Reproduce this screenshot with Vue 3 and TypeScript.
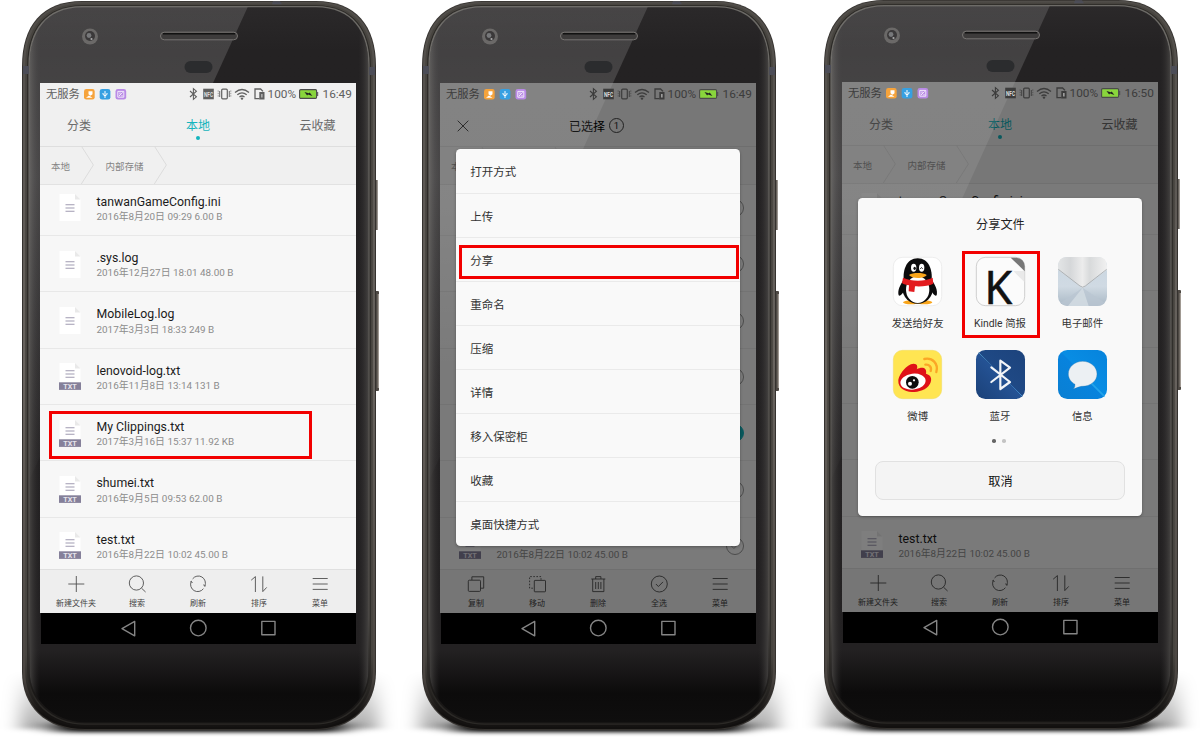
<script setup lang="ts">
interface FileRow { name: string; meta: string; txt: boolean; marked?: boolean; picked?: boolean }
interface Tool { icon: string; label: string }
interface Phone { mode: 'list' | 'menu' | 'share'; time: string; tools: Tool[] }

const files: FileRow[] = [
  { name: 'tanwanGameConfig.ini', meta: '2016年8月20日 09:29 6.00 B', txt: false },
  { name: '.sys.log', meta: '2016年12月27日 18:01 48.00 B', txt: false },
  { name: 'MobileLog.log', meta: '2017年3月3日 18:33 249 B', txt: false },
  { name: 'lenovoid-log.txt', meta: '2016年11月8日 13:14 131 B', txt: true },
  { name: 'My Clippings.txt', meta: '2017年3月16日 15:37 11.92 KB', txt: true, marked: true, picked: true },
  { name: 'shumei.txt', meta: '2016年9月5日 09:53 62.00 B', txt: true },
  { name: 'test.txt', meta: '2016年8月22日 10:02 45.00 B', txt: true },
]

const browseTools: Tool[] = [
  { icon: 'plus', label: '新建文件夹' },
  { icon: 'search', label: '搜索' },
  { icon: 'refresh', label: '刷新' },
  { icon: 'sort', label: '排序' },
  { icon: 'menu', label: '菜单' },
]
const selectTools: Tool[] = [
  { icon: 'copy', label: '复制' },
  { icon: 'move', label: '移动' },
  { icon: 'trash', label: '删除' },
  { icon: 'all', label: '全选' },
  { icon: 'menu', label: '菜单' },
]

const phones: Phone[] = [
  { mode: 'list', time: '16:49', tools: browseTools },
  { mode: 'menu', time: '16:49', tools: selectTools },
  { mode: 'share', time: '16:50', tools: browseTools },
]

const actions = ['打开方式', '上传', '分享', '重命名', '压缩', '详情', '移入保密柜', '收藏', '桌面快捷方式']

const targets = [
  { icon: 'qq', label: '发送给好友' },
  { icon: 'kindle', label: 'Kindle 简报' },
  { icon: 'mail', label: '电子邮件' },
  { icon: 'weibo', label: '微博' },
  { icon: 'bluetooth', label: '蓝牙' },
  { icon: 'message', label: '信息' },
]

const toolIcons: Record<string, string> = {
  plus: '<path d="M12.3 4v16M4.3 12h16"/>',
  search: '<circle cx="11.4" cy="11" r="7.1"/><path d="M16.5 16.2 20.6 20"/>',
  refresh: '<path d="M6.6 6.9A7.1 7.1 0 0 1 18.8 14M17.4 16.7A7.1 7.1 0 0 1 5.2 9.6"/><path d="M4.4 9.8 5.3 9.2 6.4 11M19.6 13.8 18.7 14.4 17.6 12.6"/>',
  sort: '<path d="M4.2 8.2 8.4 4.6V20M15.8 4.4V19.6L19.7 15.4"/>',
  menu: '<path d="M4.7 6.5h15M4.7 12h15M4.7 17.4h15"/>',
  copy: '<rect x="4.3" y="8.2" width="12.2" height="11.2" rx="1"/><path d="M7.9 8V4.8h11.8v11.4h-3"/>',
  move: '<rect x="9.3" y="8.4" width="11.2" height="11.4" rx=".6"/><path stroke-dasharray="1.6 1.5" d="M16 7.8V4.6H4.6v11.6h4"/>',
  trash: '<path d="M5.3 7h14M9.7 7V4.6h5.2V7M6.7 7v12.6h11.2V7M9.7 10v7M12.3 10v7M14.9 10v7"/>',
  all: '<circle cx="12.3" cy="12" r="8"/><path d="m8.9 12 2.5 2.5 4.6-4.6"/>',
}

// App icons share a 147-unit square canvas.
const appIcons: Record<string, string> = {
  qq: `<rect x="1" y="1" width="145" height="145" rx="27" fill="#fff" stroke="#e6e6e6" stroke-width="2"/>
    <ellipse cx="54" cy="136" rx="24" ry="6" fill="#f9a51a"/><ellipse cx="94" cy="136" rx="24" ry="6" fill="#f9a51a"/>
    <path d="M34 66C20 84 13 102 17 115C22 120 30 108 34 100ZM114 66C128 84 135 102 131 115C126 120 118 108 114 100Z" fill="#0b0b0c"/>
    <ellipse cx="74" cy="94" rx="46" ry="46" fill="#0b0b0c"/>
    <path d="M32 66C30 40 40 4 74 4S118 40 116 66Z" fill="#0b0b0c"/>
    <ellipse cx="74" cy="98" rx="35" ry="40" fill="#fff"/>
    <ellipse cx="62" cy="32" rx="8" ry="12" fill="#fff"/><ellipse cx="86" cy="32" rx="8" ry="12" fill="#fff"/>
    <ellipse cx="65" cy="34" rx="3.6" ry="5" fill="#111"/><path d="M82 35q3-6 7 0" fill="none" stroke="#111" stroke-width="3"/>
    <path d="M48 54C60 46 90 46 101 54C94 66 56 66 48 54Z" fill="#f9a51a"/>
    <path d="M30 62C56 74 94 74 119 62L121 80C108 87 88 89 66 88L64 105L47 103L48 85C40 84 32 82 27 78Z" fill="#e31b1f"/>`,
  kindle: `<rect x="1" y="1" width="145" height="145" rx="27" fill="#fbfbfb" stroke="#b9b9b9" stroke-width="2"/>
    <path d="M104 2h16q25 2 26 26v15Z" fill="#777"/><path d="M112 42l33 0v33Z" fill="#e9e9e9"/>
    <text x="25" y="140" font-family="Noto Sans, Open Sans, sans-serif" font-size="138" textLength="84" lengthAdjust="spacingAndGlyphs" fill="#111" stroke="#111" stroke-width="1.5">K</text>`,
  mail: `<defs><linearGradient id="mailBody" x1="0" y1="0" x2="0" y2="1"><stop offset="0" stop-color="#c9d6e1"/><stop offset=".6" stop-color="#d0dae3"/><stop offset="1" stop-color="#a9b8c5"/></linearGradient>
    <linearGradient id="mailFlap" x1="0" y1="0" x2="1" y2="0"><stop offset="0" stop-color="#e3e5e6"/><stop offset=".25" stop-color="#d5d7d9"/><stop offset=".5" stop-color="#ececec"/><stop offset=".65" stop-color="#d8dadb"/><stop offset="1" stop-color="#f1f1f1"/></linearGradient></defs>
    <rect width="147" height="147" rx="28" fill="url(#mailBody)"/>
    <path d="M74 92 8 137Q17 147 28 147H119Q132 147 140 137Z" fill="#b9c6d1" opacity=".75"/>
    <path d="M74 92 30 147H92Z" fill="#d4dde4" opacity=".8"/>
    <path d="M0 38V28Q0 0 28 0H119Q147 0 147 28V38L82 88Q74 95 66 88Z" fill="url(#mailFlap)"/>
    <path d="M1 37 66 87Q74 94 82 87L146 37" fill="none" stroke="#a3a8ac" stroke-width="2.5"/>`,
  weibo: `<rect x="1" y="1" width="145" height="145" rx="27" fill="#ffe552" stroke="#eedb60" stroke-width="1.5"/>
    <path d="M16 92C17 75 40 42 62 41C73 41 75 50 71 58C86 50 103 52 99 71C115 75 118 88 111 101C101 120 77 126 57 126C33 125 15 112 16 92Z" fill="#df1118"/>
    <ellipse cx="60" cy="95" rx="38" ry="24" transform="rotate(-7 60 95)" fill="#fff"/>
    <circle cx="58" cy="97" r="19" fill="#0d0d0d"/><circle cx="51" cy="101" r="6" fill="#fff"/><circle cx="63" cy="91" r="3.4" fill="#fff"/>
    <path d="M94 27C118 22 137 40 130 66M97 44C109 42 117 52 113 63" fill="none" stroke="#fba626" stroke-width="7" stroke-linecap="round"/>`,
  bluetooth: `<defs><linearGradient id="btBack" x1="0" y1="1" x2="1" y2="0"><stop offset="0" stop-color="#1b4178"/><stop offset=".48" stop-color="#245294"/><stop offset=".52" stop-color="#1f4985"/><stop offset="1" stop-color="#1c437c"/></linearGradient>
    <linearGradient id="btShine" x1="0" y1="0" x2="1" y2="1"><stop offset="0" stop-color="#62b5d9" stop-opacity=".7"/><stop offset=".45" stop-color="#3a7ec2" stop-opacity=".1"/><stop offset="1" stop-color="#4da0df" stop-opacity=".8"/></linearGradient></defs>
    <rect width="147" height="147" rx="28" fill="url(#btBack)"/><path d="M8 8 139 139" stroke="url(#btShine)" stroke-width="3"/>
    <path d="M46 52 102 96 73 117V32L102 53 46 96" fill="none" stroke="#f3f5f8" stroke-width="6.5" stroke-linejoin="round" stroke-linecap="round"/>`,
  message: `<defs><linearGradient id="msgBack" x1="0" y1="1" x2="1" y2="0"><stop offset="0" stop-color="#0a7fd2"/><stop offset=".5" stop-color="#0783de"/><stop offset=".52" stop-color="#088de4"/><stop offset="1" stop-color="#0683dc"/></linearGradient></defs>
    <rect width="147" height="147" rx="28" fill="url(#msgBack)"/><path d="M98 98 140 140" stroke="#35b9f2" stroke-width="5" opacity=".6"/>
    <path d="M74 34C98 34 117 51 117 72S98 109 72 109C65 109 61 112 46 117Q52 111 51 103C39 96 31 85 31 72C31 51 50 34 74 34Z" fill="#ecf0f3" stroke="#276fa7" stroke-width="1"/>`,
}

/** Outline of the handset, shrunk evenly by the given inset. */
function shell(i: number): string {
  const l = 22 + i
  const r = 376 - i
  const t = 1 + i * 0.8
  const b = 730 - i
  const c = 60 - i
  const k = 20 - i * 0.5
  return `M${l} ${t + 65 - i}C${l} ${t + 25} ${l + k} ${t} ${l + c} ${t}H${r - c}C${r - k} ${t} ${r} ${t + 25} ${r} ${t + 65 - i}` +
    `V${b - 58 + i}C${r} ${b - 24} ${r - 23} ${b} ${r - 63 + i} ${b}H${l + 63 - i}C${l + 23} ${b} ${l} ${b - 24} ${l} ${b - 58 + i}Z`
}
</script>

<template>
  <main class="stage">
    <section v-for="(p, n) in phones" :key="n" class="phone" :class="p.mode">
      <svg class="shell" viewBox="0 0 400 741" width="400" height="741">
        <defs>
          <linearGradient id="metal" x1="0" y1="0" x2="0" y2="1">
            <stop offset="0" stop-color="#504d49" /><stop offset=".5" stop-color="#69645f" />
            <stop offset=".93" stop-color="#4a4541" /><stop offset=".98" stop-color="#12100f" />
          </linearGradient>
          <linearGradient id="band" x1="0" y1="0" x2="0" y2="1">
            <stop offset="0" stop-color="#47443f" /><stop offset=".9" stop-color="#47443f" /><stop offset=".98" stop-color="#151312" />
          </linearGradient>
          <linearGradient id="rim" x1="0" y1="0" x2="0" y2="1">
            <stop offset="0" stop-color="#6d6b67" /><stop offset=".85" stop-color="#54514d" /><stop offset=".96" stop-color="#191716" />
          </linearGradient>
          <linearGradient id="face" x1="0" y1="0" x2="0" y2="1">
            <stop offset="0" stop-color="#2b292a" /><stop offset=".06" stop-color="#242223" />
            <stop offset=".9" stop-color="#232122" /><stop offset=".96" stop-color="#0c0b0b" /><stop offset="1" stop-color="#0f0e0e" />
          </linearGradient>
          <linearGradient id="sides" x1="0" y1="0" x2="1" y2="0">
            <stop offset="0" stop-color="#4b4947" stop-opacity=".8" /><stop offset=".03" stop-color="#2a2829" stop-opacity="0" />
            <stop offset=".97" stop-color="#2a2829" stop-opacity="0" /><stop offset="1" stop-color="#4b4947" stop-opacity=".8" />
          </linearGradient>
          <linearGradient id="sheen" x1="0" y1="0" x2="0" y2="1">
            <stop offset="0" stop-color="#fff" stop-opacity=".13" /><stop offset=".35" stop-color="#fff" stop-opacity=".17" />
            <stop offset="1" stop-color="#fff" stop-opacity="0" />
          </linearGradient>
          <linearGradient id="ground" x1="0" y1="0" x2="0" y2="1">
            <stop offset="0" stop-color="#000" stop-opacity="0" /><stop offset="1" stop-color="#000" stop-opacity=".34" />
          </linearGradient>
          <linearGradient id="fade" x1="0" y1="0" x2="0" y2="1">
            <stop offset="0" stop-color="#fff" stop-opacity=".09" /><stop offset=".3" stop-color="#fff" stop-opacity=".08" />
            <stop offset=".75" stop-color="#fff" stop-opacity="0" />
          </linearGradient>
          <filter id="soft" x="-20%" y="-60%" width="140%" height="220%"><feGaussianBlur stdDeviation="9 2" /></filter>
          <filter id="tight" x="-20%" y="-200%" width="140%" height="500%"><feGaussianBlur stdDeviation="14 2" /></filter>
          <clipPath id="faceClip"><path :d="shell(7.5)" /></clipPath>
        </defs>
        <rect x="20" y="672" width="358" height="57" fill="url(#ground)" filter="url(#soft)" />
        <rect x="56" y="723" width="286" height="9" fill="#000" filter="url(#tight)" />
        <rect x="374" y="180" width="4" height="50" rx="1" fill="#66615b" /><path d="M377.5 180v50" stroke="#99948f" />
        <rect x="374" y="291" width="5" height="100" rx="1" fill="#4d4843" /><path d="M378.3 294v94" stroke="#aaa39b" stroke-width="1.2" />
        <path :d="shell(0)" fill="#35322f" />
        <path :d="shell(1)" fill="url(#metal)" />
        <path :d="shell(3.2)" fill="url(#band)" />
        <path :d="shell(5.2)" fill="#2b2926" />
        <path :d="shell(6.4)" fill="url(#rim)" />
        <path :d="shell(7.8)" fill="url(#face)" />
        <path :d="shell(7.8)" fill="url(#sides)" />
        <path d="M23 66h6v8h-6zM369 67h6v8h-6zM273 1.3h7l2 3h-10z" fill="#4c4d57" />
        <path clip-path="url(#faceClip)" d="M20 2H250L213 83 20 500Z" fill="url(#sheen)" />
        <circle cx="90" cy="36.5" r="8" fill="#6b6968" /><circle cx="90" cy="36" r="5" fill="#3b393a" />
        <circle cx="89" cy="35.5" r="2.4" fill="#77787a" /><circle cx="91.5" cy="39" r="1.1" fill="#aaa" />
        <rect x="160.5" y="32.2" width="77" height="7.6" rx="3.8" fill="#3d3b3b" stroke="#777472" />
        <path d="M163 33.7H235" stroke="#111" stroke-width="1.5" />
        <rect x="184.5" y="61" width="28" height="12" rx="6" fill="#2b2c2e" />
      </svg>

      <div class="screen">
        <header class="status">
          <span class="carrier">无服务</span>
          <svg class="tray" viewBox="0 0 43 11" width="43" height="11">
            <rect width="10.7" height="10.6" rx="2.4" fill="#f6a33b" /><path d="M4.5 2.2h4v3l-2 1.5-2-1.5zM2 8.8 5 6.5l3.5 2.3z" fill="#fff" />
            <rect x="15.7" width="10.7" height="10.6" rx="2.4" fill="#36a0e2" /><path d="M21 2v7M19 4v1.5l2 1.3 2-1.3V4" stroke="#fff" fill="none" />
            <rect x="31.5" width="10.7" height="10.6" rx="2.4" fill="#b98ae6" /><path d="M33.8 2.4h6v5.8h-6zM35 7l3.7-3.6M36 3.4v2M38 6v1.5" stroke="#fff" stroke-width=".8" fill="none" />
          </svg>
          <svg class="signals" viewBox="0 0 76 14" width="76" height="14">
            <g fill="none" stroke="currentColor" stroke-width="1.1">
              <path d="M1 4 7.4 9.8 4.4 12.3V1.7l3 2.5L1 10" />
              <rect x="32.7" y="2.2" width="5.6" height="9.6" rx="1" stroke-width="1.2" />
              <path d="M30.7 4v6M40.3 4v6" stroke-width=".9" /><path d="M29.2 3.4v7.2M41.8 3.4v7.2" stroke-width=".6" stroke-dasharray="1.4 1" />
              <path d="M46 5.5Q53 -.5 60 5.5M48.3 7.8Q53 4 57.7 7.8M50.5 10Q53 8 55.5 10" stroke-width="1.3" />
              <path d="M70.5 11.7H66V2h5.6l2.4 2.4" stroke-width="1.3" />
            </g>
            <rect x="70.3" y="5" width="5.2" height="7.5" fill="currentColor" />
            <circle cx="53" cy="11.6" r="1.2" fill="currentColor" />
            <path d="M72.9 7v3.5" stroke="#ddd" />
            <rect x="14.2" y="1.7" width="10.6" height="10.6" fill="currentColor" />
            <text x="15" y="9.9" font-size="7.8" font-weight="700" textLength="9" lengthAdjust="spacingAndGlyphs" class="knock">NFC</text>
          </svg>
          <span class="percent">100%</span>
          <svg class="battery" viewBox="0 0 20 10" width="20" height="10">
            <rect x=".6" y=".6" width="17" height="8.8" rx="1.2" fill="#89d53c" stroke="#4b4b4b" stroke-width="1.1" /><path d="M18.7 3v4" stroke="#4b4b4b" />
            <path d="M5.5 3 9.8 4.3 10.7 3.4 13.4 7 9 5.6 8.1 6.5Z" fill="#222" />
          </svg>
          <time>{{ p.time }}</time>
        </header>

        <div v-if="p.mode === 'menu'" class="selecting">
          <svg class="close" viewBox="0 0 12 12" width="12" height="12"><path d="M.7.7 11.3 11.3M11.3.7.7 11.3" /></svg>
          <span class="picked-title">已选择<b>1</b></span>
        </div>
        <nav v-else class="tabs">
          <span>分类</span><span class="on">本地</span><span>云收藏</span>
        </nav>

        <div class="crumbs">
          <span>本地</span>
          <svg viewBox="0 0 13 38" width="13" height="38"><path d="M.3 0 12.4 19 .3 38" /></svg>
          <span>内部存储</span>
          <svg viewBox="0 0 13 38" width="13" height="38"><path d="M.3 0 12.4 19 .3 38" /></svg>
        </div>

        <ul class="files">
          <li v-for="f in files" :key="f.name">
            <svg class="doc" viewBox="0 0 22 27" width="22" height="27">
              <path d="M.5 0H16l5.5 5.5V27H.5z" fill="#fff" /><path d="M16 0v5.5h5.5z" fill="#e9e9e9" />
              <template v-if="f.txt">
                <path d="M6.5 7.8h9M6.5 11h9M6.5 14.2h9" stroke="#a09bb1" stroke-width="1.1" />
                <rect y="19.3" width="22" height="7.6" fill="#85809a" />
                <text x="11" y="25.7" text-anchor="middle" class="tag">TXT</text>
              </template>
              <path v-else d="M6.5 10.7h9M6.5 14h9M6.5 17.3h9" stroke="#a09bb1" stroke-width="1.1" />
            </svg>
            <div class="info"><strong>{{ f.name }}</strong><small>{{ f.meta }}</small></div>
            <i v-if="p.mode === 'menu'" class="check" :class="{ full: f.picked }">
              <svg viewBox="0 0 18 18" width="18" height="18"><path d="m5.4 9 2.5 2.5 4.8-4.8" /></svg>
            </i>
            <em v-if="p.mode === 'list' && f.marked" class="mark"></em>
          </li>
        </ul>

        <footer class="tools">
          <div v-for="t in p.tools" :key="t.label">
            <svg viewBox="0 0 24 24" width="24" height="24" v-html="toolIcons[t.icon]"></svg>
            <span>{{ t.label }}</span>
          </div>
        </footer>

        <template v-if="p.mode !== 'list'">
          <div class="dim"></div>
          <svg class="glare" viewBox="0 0 316 420" width="316" height="420"><path d="M0 0H173L0 381Z" fill="url(#fade)" /></svg>
        </template>

        <ul v-if="p.mode === 'menu'" class="sheet actions">
          <li v-for="a in actions" :key="a">{{ a }}<em v-if="a === '分享'" class="mark"></em></li>
        </ul>

        <div v-if="p.mode === 'share'" class="sheet dialog">
          <h2>分享文件</h2>
          <div class="grid">
            <div v-for="t in targets" :key="t.icon" class="target">
              <svg viewBox="0 0 147 147" width="49" height="49" v-html="appIcons[t.icon]"></svg>
              <span>{{ t.label }}</span>
              <em v-if="t.icon === 'kindle'" class="mark"></em>
            </div>
          </div>
          <div class="pager"><i></i><i></i></div>
          <button>取消</button>
        </div>
      </div>

      <div class="keys">
        <svg viewBox="0 0 315 30" width="315" height="30">
          <path d="M81 14.6 93.7 7.4V21.8Z" /><circle cx="157.3" cy="14.1" r="7.8" /><rect x="220.8" y="7.4" width="13.2" height="13.4" />
        </svg>
      </div>
    </section>
  </main>
</template>

<style>
body { margin: 0; background: #fff; }
</style>

<style scoped>
.stage { display: flex; width: 1200px; height: 740px; overflow: hidden; background: #fff; font-family: Roboto, "Noto Sans CJK SC", sans-serif; }
.phone { position: relative; flex: none; width: 400px; height: 741px; }
.phone.share { margin: -1px 0 0 2px; }
.shell { position: absolute; inset: 0; }
.screen { position: relative; display: flex; flex-direction: column; width: 316px; height: 530px; margin: 83px 0 0 40px; background: #f0f0f0; overflow: hidden; }

.status { position: relative; z-index: 2; display: flex; align-items: center; height: 22px; padding-left: 6px; color: #606060; font-size: 11.3px; line-height: 22px; white-space: nowrap; flex: none; }
.menu .status, .share .status { color: #3c3c3c; }
.carrier { width: 38.5px; padding-top: 1px; }
.tray { margin-left: -.2px; }
.signals { margin-left: 61.7px; margin-right: 2.5px; }
.knock { fill: #ddd; font-family: Roboto, sans-serif; }
.percent { width: 31px; font-size: 11.8px; }
.battery { margin-right: 4px; margin-left: 0; }
time { font-size: 11.8px; }

.tabs { display: grid; grid-template-columns: 1fr auto 1fr; box-sizing: border-box; height: 41.5px; padding: 11px 20.5px 0 20.5px; border-bottom: 1px solid #dedede; color: #6b6b6b; font-size: 12px; line-height: 20px; flex: none; }
.tabs span:first-child { padding-left: 6.5px; }
.tabs span:last-child { text-align: right; }
.tabs .on { position: relative; color: #14b4bd; }
.tabs .on::after { content: ""; position: absolute; left: 10px; top: 19.5px; width: 4.4px; height: 4.4px; border-radius: 50%; background: #14b4bd; }

.selecting { position: relative; display: flex; align-items: center; justify-content: center; box-sizing: border-box; height: 41.5px; border-bottom: 1px solid #dedede; flex: none; }
.close { position: absolute; left: 17px; top: 14.5px; fill: none; stroke: #333; stroke-width: 1; }
.picked-title { display: flex; align-items: center; gap: 4px; font-size: 12px; color: #000; margin-left: -3px; }
.picked-title b { width: 13px; height: 13px; border: 1px solid #444; border-radius: 50%; font-weight: 400; font-size: 9.5px; line-height: 13.5px; text-align: center; color: #222; }

.crumbs { display: flex; align-items: center; box-sizing: border-box; height: 38.5px; padding-left: 11px; border-bottom: 1px solid #e2e2e2; font-size: 9.5px; color: #858585; flex: none; }
.crumbs span { padding-top: .6px; }
.crumbs svg { fill: none; stroke: #dcdcdc; margin: 0 12px 0 10.5px; }

.files { display: flex; flex-direction: column; flex: none; box-sizing: border-box; height: 383.5px; margin: 0; padding: 0; list-style: none; overflow: hidden; background: #f7f7f7; }
.files li { position: relative; display: flex; box-sizing: border-box; flex: none; height: 56.35px; padding: 14.6px 0 0 19px; border-bottom: 1px solid #e8e8e8; }
.files li:first-child { margin-top: -5.3px; }
.info { display: flex; flex-direction: column; margin-left: 15.5px; white-space: nowrap; }
.info strong { margin-top: -.6px; font-weight: 400; font-size: 12.3px; line-height: 17px; color: #1b1b1b; }
.info small { margin-top: -1.6px; font-size: 9.9px; line-height: 15px; color: #8c8c8c; }
.tag { font: 700 7.2px Roboto, sans-serif; fill: #e6e4ec; }
.check { position: absolute; right: 12.3px; top: 19.3px; box-sizing: border-box; width: 18px; height: 18px; border: 1px solid #999; border-radius: 50%; }
.check svg { position: absolute; left: -1px; top: -1px; fill: none; stroke: #aaa; }
.check.full { border-color: #14b4bd; background: #14b4bd; }

.tools { display: flex; justify-content: center; box-sizing: border-box; flex: 1; padding-top: 2.6px; border-top: 1px solid #e0e0e0; background: #eee; }
.tools div { display: flex; flex-direction: column; align-items: center; width: 61px; font-size: 8px; line-height: 12px; color: #444; white-space: nowrap; }
.tools svg { fill: none; stroke: #4f4f4f; stroke-width: .9; }
.tools span { margin-top: 1.9px; }

.keys { position: relative; display: flex; width: 315px; height: 30px; padding-top: 1px; margin-left: 41px; background: #000; }
.keys svg { fill: none; stroke: #858585; stroke-width: 1.4; stroke-linejoin: round; }

.dim { position: absolute; inset: 0; background: rgba(0, 0, 0, .505); }
.glare { position: absolute; left: 0; top: 0; }

.sheet { position: absolute; z-index: 3; left: 16.3px; box-sizing: border-box; width: 284.2px; border-radius: 4.5px; background: #f9f9f9; box-shadow: 0 1px 3px rgba(0, 0, 0, .3); }
.actions { top: 66.4px; margin: 0; padding: 0; list-style: none; }
.actions li { position: relative; box-sizing: border-box; height: 44.05px; padding-left: 14px; border-bottom: 1px solid #eaeaea; font-size: 11.5px; line-height: 47px; color: #333; }
.actions li:first-child { height: 44.5px; }
.actions li:last-child { border-bottom: 0; }
.mark { position: absolute; box-sizing: border-box; border: 3px solid #f20000; }
.files .mark { left: 9px; top: 6px; width: 263px; height: 48px; }
.actions .mark { left: 2.3px; top: 6.9px; width: 280.5px; height: 34.5px; }

.dialog { display: flex; flex-direction: column; align-items: center; top: 116.4px; height: 317.5px; }
.sheet h2 { margin: 16.5px 0 0; font-weight: 400; font-size: 12.2px; line-height: 20px; color: #222; }
.grid { display: grid; grid-template-columns: repeat(3, 82.3px); grid-auto-rows: 93px; margin-top: 22px; }
.target { position: relative; display: flex; flex-direction: column; align-items: center; gap: 10px; font-size: 10.4px; line-height: 15px; color: #333; white-space: nowrap; }
.target svg { overflow: visible; margin-left: -.6px; }
.target span { margin-left: -.8px; }
.target .mark { left: 2.3px; top: -6.3px; width: 78px; height: 87px; }
.pager { display: flex; gap: 6.5px; height: 3.5px; margin-top: -3.5px; margin-left: -3px; }
.pager i { width: 3.5px; height: 3.5px; border-radius: 50%; background: #666; }
.pager i + i { background: #c4c4c4; }
button { box-sizing: border-box; width: 250px; height: 39.5px; margin-top: 18px; padding: 0; border: 1px solid #e1e1e1; border-radius: 8px; background: #f4f4f4; font: 12.2px Roboto, "Noto Sans CJK SC", sans-serif; color: #111; }
</style>
